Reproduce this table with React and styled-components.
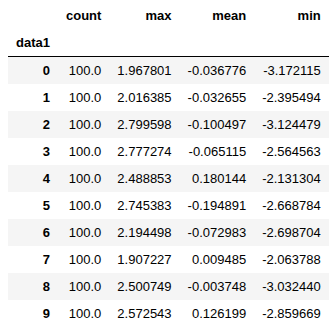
import React from "react";
import styled, { createGlobalStyle } from "styled-components";

const GlobalStyle = createGlobalStyle`
  body {
    margin: 0;
    padding: 2px 8px 0 8px;
    background: #fff;
    font-family: "Liberation Sans", Arial, sans-serif;
  }
`;

const Table = styled.table`
  border-collapse: collapse;
  border-spacing: 0;
  border: none;
  font-size: 13px;
  color: #000;
  table-layout: auto;
`;

const Head = styled.thead`
  border-bottom: 1px solid #000;
  vertical-align: bottom;
`;

const Row = styled.tr`
  background: ${(p) => (p.$striped ? "#f5f5f5" : "transparent")};
`;

const Th = styled.th`
  padding: 6px 8px;
  line-height: 15px;
  height: 15px;
  font-weight: bold;
  text-align: ${(p) => (p.$left ? "left" : "right")};
  vertical-align: middle;
  white-space: nowrap;
`;

const Td = styled.td`
  padding: 6px 8px;
  line-height: 15px;
  height: 15px;
  text-align: right;
  vertical-align: middle;
  white-space: nowrap;
`;

const columns = ["count", "max", "mean", "min"];

const rows = [
  ["100.0", "1.967801", "-0.036776", "-3.172115"],
  ["100.0", "2.016385", "-0.032655", "-2.395494"],
  ["100.0", "2.799598", "-0.100497", "-3.124479"],
  ["100.0", "2.777274", "-0.065115", "-2.564563"],
  ["100.0", "2.488853", "0.180144", "-2.131304"],
  ["100.0", "2.745383", "-0.194891", "-2.668784"],
  ["100.0", "2.194498", "-0.072983", "-2.698704"],
  ["100.0", "1.907227", "0.009485", "-2.063788"],
  ["100.0", "2.500749", "-0.003748", "-3.032440"],
  ["100.0", "2.572543", "0.126199", "-2.859669"],
];

export default function App() {
  return (
    <>
      <GlobalStyle />
      <Table>
        <Head>
          <tr>
            <Th />
            {columns.map((c) => (
              <Th key={c}>{c}</Th>
            ))}
          </tr>
          <tr>
            <Th $left>data1</Th>
            {columns.map((c) => (
              <Th key={c} />
            ))}
          </tr>
        </Head>
        <tbody>
          {rows.map((r, i) => (
            <Row key={i} $striped={i % 2 === 0}>
              <Th>{i}</Th>
              {r.map((v, j) => (
                <Td key={j}>{v}</Td>
              ))}
            </Row>
          ))}
        </tbody>
      </Table>
    </>
  );
}
